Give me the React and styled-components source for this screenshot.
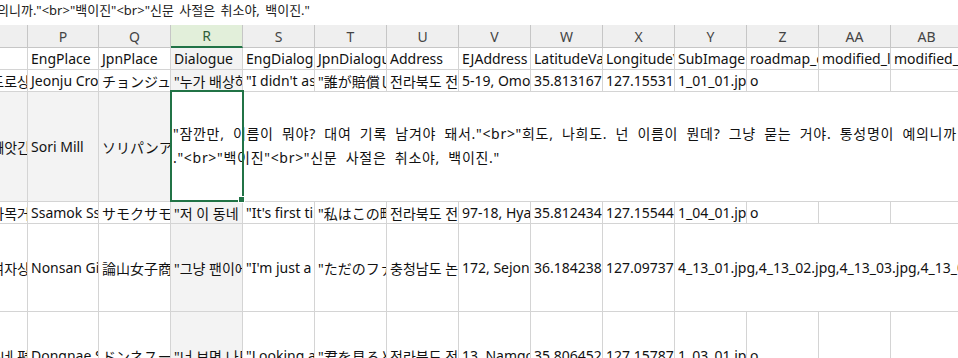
import React from "react";
import styled, { createGlobalStyle, css } from "styled-components";

const GlobalStyle = createGlobalStyle`
  html, body {
    margin: 0;
    padding: 0;
    background: #ffffff;
  }
  body {
    width: 958px;
    height: 358px;
    overflow: hidden;
    font-family: "Noto Sans", "Noto Sans CJK KR", sans-serif;
  }
`;

const GRID = "#d4d4d4";
const HEAD_LINE = "#c6c6c6";
const GREEN = "#217346";

const Sheet = styled.div`
  width: 958px;
  height: 358px;
  overflow: hidden;
  display: flex;
  flex-direction: column;
`;

const FormulaTail = styled.div`
  flex: none;
  height: 25px;
  line-height: 20px;
  font-size: 13px;
  word-spacing: 2px;
  color: #222;
  white-space: nowrap;
  overflow: hidden;

  span {
    margin-left: -3px;
  }
`;

const Grid = styled.div`
  margin-left: -45px;
  display: flex;
  flex-direction: column;
`;

const Row = styled.div`
  display: flex;
  flex: none;
  height: ${({ $h }) => $h}px;
`;

const HeadCell = styled.div`
  flex: none;
  width: ${({ $w }) => $w}px;
  box-sizing: border-box;
  background: #efefef;
  border-right: 1px solid ${HEAD_LINE};
  border-bottom: 1px solid ${HEAD_LINE};
  display: flex;
  align-items: center;
  justify-content: center;
  font-size: 14px;
  color: #444;

  ${({ $active }) =>
    $active &&
    css`
      background: #e2efda;
      color: #2f5f3a;
      border-bottom: 2px solid ${GREEN};
    `}
`;

const Cell = styled.div`
  flex: none;
  width: ${({ $w }) => $w}px;
  box-sizing: border-box;
  border-right: 1px solid ${GRID};
  border-bottom: 1px solid ${GRID};
  background: ${({ $hl }) => ($hl ? "#f3f3f3" : "#ffffff")};
  display: flex;
  align-items: center;
  justify-content: ${({ $end }) => ($end ? "flex-end" : "flex-start")};
  padding: 0 0 0 3px;
  overflow: hidden;
  white-space: nowrap;
  font-size: 14px;
  color: #111;

  span {
    margin-right: ${({ $end }) => ($end ? "-3px" : "0")};
  }
`;

const Editor = styled.div`
  flex: 1;
  position: relative;
  box-sizing: border-box;
  border-bottom: 1px solid ${GRID};
  background: #ffffff;
  display: flex;
  flex-direction: column;
  justify-content: center;
  padding: 0 0 2px 2px;
  white-space: nowrap;
  font-size: 14px;
  letter-spacing: 0.7px;
  word-spacing: 4px;
  line-height: 24px;
  color: #111;
`;

const ActiveFrame = styled.div`
  position: absolute;
  left: -1px;
  top: -2px;
  width: 74px;
  height: calc(100% + 3px);
  box-sizing: border-box;
  border: 2px solid ${GREEN};
  pointer-events: none;
`;

const FillHandle = styled.div`
  position: absolute;
  right: -3px;
  bottom: -3px;
  width: 7px;
  height: 7px;
  box-sizing: border-box;
  background: ${GREEN};
  border: 1px solid #ffffff;
`;

// column widths: O (mostly off screen), P, then Q..AB
const W = [73, 71, 72, 72, 72, 72, 72, 72, 72, 72, 72, 72, 72, 72];
const LETTERS = ["", "P", "Q", "R", "S", "T", "U", "V", "W", "X", "Y", "Z", "AA", "AB"];
const ACTIVE_COL = 3;

const rows = [
  {
    h: 22,
    cells: ["", "EngPlace", "JpnPlace", "Dialogue", "EngDialogue", "JpnDialogue", "Address", "EJAddress", "LatitudeValue", "LongitudeValue", "SubImage", "roadmap_check", "modified_lat", "modified_lng"],
  },
  {
    h: 22,
    cells: ["앞 도로상", "Jeonju Crossroad", "チョンジュ交差点", "\"누가 배상하래?\"", "\"I didn't ask for it.\"", "\"誰が賠償しろって?\"", "전라북도 전주시", "5-19, Omok-daegil", "35.813167", "127.15531", "1_01_01.jpg", "o", "", ""],
  },
  { h: 110, edit: true, cells: ["을 빼앗긴", "Sori Mill", "ソリパンアッカン"] },
  {
    h: 22,
    cells: ["쌈사목거", "Ssamok Ssamok", "サモクサモク", "\"저 이 동네 처음이에요.\"", "\"It's first time here.\"", "\"私はこの町は初めて\"", "전라북도 전주시", "97-18, Hyangyo-gil", "35.812434", "127.15544", "1_04_01.jpg", "o", "", ""],
  },
  {
    h: 88,
    span: 4,
    cells: ["논산여자상", "Nonsan Girls' High", "論山女子商業高校", "\"그냥 팬이에요.\"", "\"I'm just a fan.\"", "\"ただのファンです\"", "충청남도 논산시", "172, Sejong-ro", "36.184238", "127.09737", "4_13_01.jpg,4_13_02.jpg,4_13_03.jpg,4_13_04.jpg"],
  },
  {
    h: 88,
    cells: ["동네 편", "Dongnae Store", "ドンネスーパー", "\"너 보면 나도 모르게\"", "\"Looking at you...\"", "\"君を見ると\"", "전라북도 전주시", "13, Namgo-gil", "35.806452", "127.15787", "1_03_01.jpg", "o", "", ""],
  },
];

const EDIT_LINES = [
  "\"잠깐만, 이름이 뭐야? 대여 기록 남겨야 돼서.\"<br>\"희도, 나희도. 넌 이름이 뭔데? 그냥 묻는 거야. 통성명이 예의니까",
  ".\"<br>\"백이진\"<br>\"신문 사절은 취소야, 백이진.\"",
];

const DataRow = ({ row }) => {
  if (row.edit) {
    return (
      <Row $h={row.h}>
        {row.cells.map((text, i) => (
          <Cell key={i} $w={W[i]} $hl $end={i === 0}>
            <span>{text}</span>
          </Cell>
        ))}
        <Editor>
          {EDIT_LINES.map((line, i) => (
            <div key={i}>{line}</div>
          ))}
          <ActiveFrame>
            <FillHandle />
          </ActiveFrame>
        </Editor>
      </Row>
    );
  }

  return (
    <Row $h={row.h}>
      {row.cells.map((text, i) => {
        const isLast = i === row.cells.length - 1;
        const width = row.span && isLast ? W[i] * row.span : W[i];
        return (
          <Cell key={i} $w={width} $hl={i === ACTIVE_COL} $end={i === 0}>
            <span>{text}</span>
          </Cell>
        );
      })}
    </Row>
  );
};

export default function App() {
  return (
    <>
      <GlobalStyle />
      <Sheet>
        <FormulaTail>
          <span>의니까."&lt;br&gt;"백이진"&lt;br&gt;"신문 사절은 취소야, 백이진."</span>
        </FormulaTail>
        <Grid>
          <Row $h={23}>
            {LETTERS.map((l, i) => (
              <HeadCell key={i} $w={W[i]} $active={i === ACTIVE_COL}>
                {l}
              </HeadCell>
            ))}
          </Row>
          {rows.map((row, i) => (
            <DataRow key={i} row={row} />
          ))}
        </Grid>
      </Sheet>
    </>
  );
}
